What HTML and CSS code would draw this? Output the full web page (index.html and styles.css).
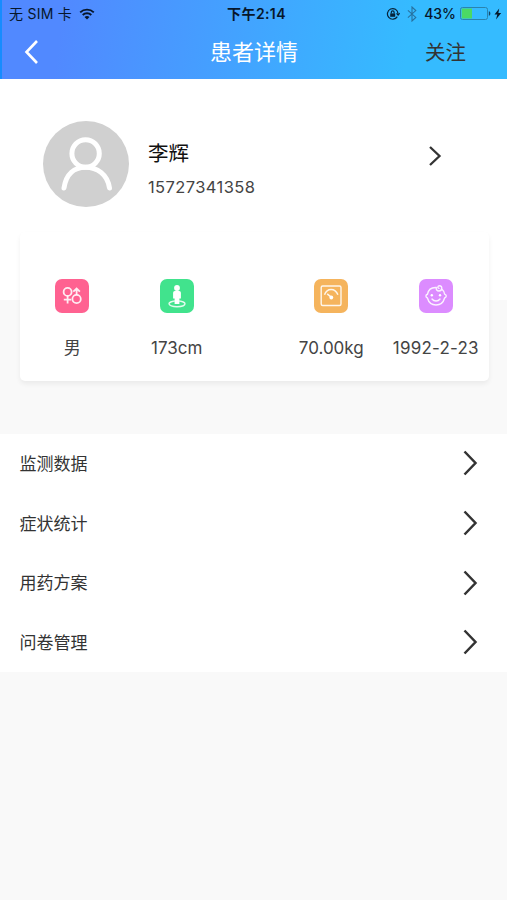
FILE: index.html
```html
<!DOCTYPE html>
<html lang="zh-CN">
<head>
<meta charset="utf-8">
<title>患者详情</title>
<link rel="stylesheet" href="styles.css">
</head>
<body>
<header class="header">
  <div class="status">
    <div class="carrier"><span>无 SIM 卡</span>
      <svg width="16" height="12" viewBox="0 0 16 12" fill="none" stroke="#07162a" stroke-width="1.9"><path d="M1.2 4.4a9.8 9.8 0 0 1 13.6 0M3.7 7a6.2 6.2 0 0 1 8.6 0"/><path d="M5.5 9a3.8 3.8 0 0 1 5 0L8 11.5z" fill="#07162a" stroke="none"/></svg>
    </div>
    <div class="clock">下午2:14</div>
    <div class="indicators">
      <svg width="14" height="14" viewBox="0 0 14 14" fill="none" stroke="#07233a" stroke-width="1.2"><path d="M11.300 9.600A5.300 5.300 0 1 1 12 6.400M10.500 6.300l1.600 1.700 1.500-1.800"/><path d="M4.200 6.400h5v3.400h-5z" fill="#07233a" stroke="none"/><path d="M5.300 6.500V5.200a1.400 1.400 0 0 1 2.800 0v1.300"/></svg>
      <svg class="bluetooth" width="10" height="16" viewBox="0 0 10 16" fill="none" stroke="#27719f" stroke-width="1.1"><path d="M.9 4.400l7.900 7L5 15V1l3.800 3.600-7.900 7"/></svg>
      <span class="percent">43%</span>
      <svg class="battery" width="31" height="13" viewBox="0 0 31 13"><rect x=".5" y=".5" width="27" height="12" rx="2" fill="none" stroke="#2a83ae"/><path d="M1.700 1.500H12v10H1.700z" fill="#4bd964"/><path d="M28.800 4.200c2.100.5 2.100 4.100 0 4.600z" fill="#12486b"/></svg>
      <svg width="8" height="12" viewBox="0 0 8 12"><path d="M5.200.5L.5 6.600h2.800L2 11.500l5.200-6.400H4.400z" fill="#06192b"/></svg>
    </div>
  </div>
  <nav class="navbar">
    <svg class="back" width="16" height="26" viewBox="0 0 16 26" fill="none" stroke="#fff" stroke-width="2.6"><path d="M14 2L3.500 13 14 24"/></svg>
    <h1 class="title">患者详情</h1>
    <span class="follow">关注</span>
  </nav>
</header>
<main>
  <section class="profile">
    <svg class="avatar" width="86" height="86" viewBox="0 0 86 86"><circle cx="43" cy="43" r="43" fill="#d0d0d0"/><g fill="none" stroke="#fff" stroke-width="5" stroke-linecap="round"><circle cx="42.600" cy="32.500" r="13.700"/><path d="M21 67c2-14 10.500-20.800 21.600-20.800S64.500 53 66.500 67"/></g></svg>
    <div class="identity">
      <div class="name">李辉</div>
      <div class="phone">15727341358</div>
    </div>
    <svg class="more" width="14" height="22" viewBox="0 0 14 22" fill="none" stroke="#333" stroke-width="2.300"><path d="M2 2L11.500 11 2 20"/></svg>
  </section>
  <section class="card">
    <div class="stat">
      <svg class="icon pink" viewBox="0 0 34 34" fill="none" stroke="#fff" stroke-opacity=".88" stroke-width="1.800"><circle cx="12.600" cy="12.900" r="4"/><path d="M12.600 16.900v7.600M8.800 20.600h7.400"/><circle cx="21.600" cy="20" r="4.200"/><path d="M21.600 15.800V9.700M18.300 12.700l3.300-3.100 3.300 3.100"/></svg>
      <span>男</span>
    </div>
    <div class="stat">
      <svg class="icon green" viewBox="0 0 34 34"><ellipse cx="17" cy="24.800" rx="8" ry="2.900" fill="none" stroke="#fff" stroke-opacity=".85" stroke-width="1.400"/><circle cx="17" cy="9" r="2.900" fill="#fff"/><path d="M14.800 12h4.400q1.700 0 1.700 1.700v5.700h-1.500v5.600h-4.800v-5.600h-1.500v-5.700q0-1.700 1.700-1.700z" fill="#fff"/></svg>
      <span>173cm</span>
    </div>
    <div class="stat weight">
      <svg class="icon orange" viewBox="0 0 34 34" fill="none" stroke="#fff" stroke-opacity=".88" stroke-width="1.400"><rect x="7.200" y="7" width="19.800" height="19.500" rx="1.500"/><path d="M10.500 15.800c2.600-7 10.600-7 13.400 0M13.200 14.800l3.700 3" stroke-width="1.500"/><circle cx="17.300" cy="18.500" r="1.900" fill="#fff" stroke="none"/></svg>
      <span>70.00kg</span>
    </div>
    <div class="stat">
      <svg class="icon purple" viewBox="0 0 34 34" fill="none" stroke="#fff" stroke-opacity=".88" stroke-width="1.400" stroke-linecap="round"><path d="M17.300 8.500C12.500 8.200 9.300 11 8.500 15.200c-2 .5-2.200 2.900-.1 3.800 1.300 4.500 4.600 7 8.600 7s7.400-2.500 8.600-7c2.200-.7 2.200-3.200 0-3.900-.1-2.100-1.300-3.700-2.600-4.900M17.300 8.500c-.5 2 .8 3.500 2.600 3.500 3.600 0 3.800-5.300.6-5.300-2 0-2.200 2.500-.5 2.700M13 20c2.100 2.700 6 2.700 8 0"/><circle cx="12.800" cy="16.300" r="1.200" fill="#fff" stroke="none"/><circle cx="21" cy="16.300" r="1.200" fill="#fff" stroke="none"/></svg>
      <span class="date">1992-2-23</span>
    </div>
  </section>
</main>
<ul class="menu">
  <li><span>监测数据</span><svg width="16" height="26" viewBox="0 0 16 26" fill="none" stroke="#333" stroke-width="2.500"><path d="M2.500 1.500L13.500 13 2.500 24.500"/></svg></li>
  <li><span>症状统计</span><svg width="16" height="26" viewBox="0 0 16 26" fill="none" stroke="#333" stroke-width="2.500"><path d="M2.500 1.500L13.500 13 2.500 24.500"/></svg></li>
  <li><span>用药方案</span><svg width="16" height="26" viewBox="0 0 16 26" fill="none" stroke="#333" stroke-width="2.500"><path d="M2.500 1.500L13.500 13 2.500 24.500"/></svg></li>
  <li><span>问卷管理</span><svg width="16" height="26" viewBox="0 0 16 26" fill="none" stroke="#333" stroke-width="2.500"><path d="M2.500 1.500L13.500 13 2.500 24.500"/></svg></li>
</ul>
</body>
</html>
```
FILE: styles.css
```css
* { box-sizing: border-box; }
body {
  margin: 0;
  min-height: 900px;
  background: #f9f9f9;
  color: #444;
  font-family: Inter, "Noto Sans CJK SC", sans-serif;
  font-size: 17px;
}
svg { display: block; flex: none; }
.header {
  height: 79px;
  border-left: 2px solid #168cff;
  background: linear-gradient(98deg, #5189ff 12%, #35bbff 80%);
}
.status {
  display: grid;
  grid-template-columns: 1fr 70px 1fr;
  align-items: center;
  height: 27px;
  padding: 0 5px 0 7px;
  color: #07162a;
  font-size: 14px;
  line-height: 20px;
}
.carrier { display: flex; align-items: center; gap: 7px; white-space: nowrap; letter-spacing: .25px; }
.clock { padding-left: 2px; text-align: center; font-weight: 600; white-space: nowrap; letter-spacing: .4px; }
.indicators { display: flex; align-items: center; justify-content: flex-end; }
.bluetooth { margin-left: 7px; }
.percent { margin-left: 7px; font-weight: 500; }
.battery { margin: 0 3px 0 4px; }
.navbar {
  display: grid;
  grid-template-columns: 80px 1fr 80px;
  align-items: center;
  height: 50px;
  padding-left: 21px;
}
.title {
  margin: 0;
  padding-right: 22px;
  color: #fff;
  font-size: 22px;
  font-weight: 400;
  line-height: 30px;
  text-align: center;
}
.follow { margin: 2px 0 0 -2px; color: #333; font-size: 20.5px; line-height: 30px; }
main { height: 221px; background: #fff; }
.profile {
  display: flex;
  align-items: center;
  height: 153px;
  padding: 16px 66px 0 43px;
}
.identity { flex: 1; margin: 11px 0 0 19px; }
.name { color: #111; font-size: 20.5px; line-height: 30px; }
.phone { margin-top: 6px; line-height: 24px; font-size: 16.5px; letter-spacing: .4px; }
.more { margin: -16px -1px 0 0; }
.card {
  display: flex;
  width: 469px;
  height: 149px;
  margin-left: 20px;
  padding-top: 46.500px;
  border-radius: 5px;
  background: #fff;
  box-shadow: 0 3px 5px rgba(0, 0, 0, .06);
}
.stat {
  display: flex;
  flex-direction: column;
  align-items: center;
  width: 104.500px;
  line-height: 24px;
  white-space: nowrap;
}
.stat span { margin-top: 23px; }
.stat .date { letter-spacing: .2px; }
.weight { margin-left: 50px; }
.icon { width: 34px; height: 34px; border-radius: 7px; }
.pink { background: #ff6291; }
.green { background: #41e38d; }
.orange { background: #f5b45d; }
.purple { background: #dc8cff; }
.menu {
  margin: 133.500px 0 0;
  padding: 0;
  list-style: none;
  background: #fff;
}
.menu li {
  display: flex;
  align-items: center;
  justify-content: space-between;
  height: 59.700px;
  padding: 0 29px 0 19.500px;
  color: #333;
}
.menu span { margin-top: -2px; }
```
